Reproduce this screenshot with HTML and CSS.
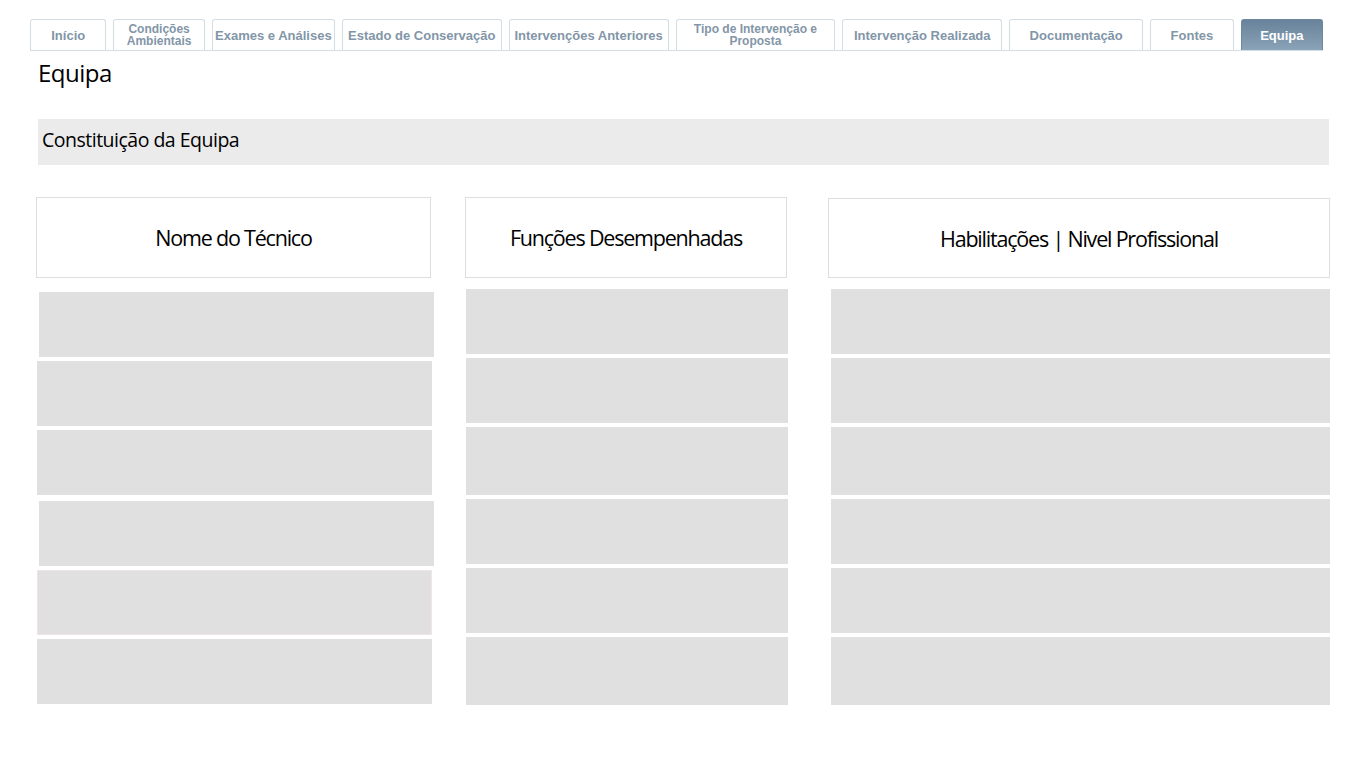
FILE: index.html
```html
<!DOCTYPE html>
<html lang="pt">
<head>
<meta charset="utf-8">
<title>Equipa</title>
<link rel="stylesheet" href="styles.css">
</head>
<body>
<nav class="tabs">
  <a class="tab w76">Início</a>
  <a class="tab w91 two">Condições<br>Ambientais</a>
  <a class="tab w124">Exames e Análises</a>
  <a class="tab w160">Estado de Conservação</a>
  <a class="tab w160">Intervenções Anteriores</a>
  <a class="tab w160 two">Tipo de Intervenção e<br>Proposta</a>
  <a class="tab w160">Intervenção Realizada</a>
  <a class="tab w134">Documentação</a>
  <a class="tab w83">Fontes</a>
  <a class="tab w82 active">Equipa</a>
</nav>
<main class="page">
  <h1 class="title">Equipa</h1>
  <div class="section">Constituição da Equipa</div>
  <div class="cols">
    <div class="col c1">
      <div class="head">Nome do Técnico</div>
      <div class="rows">
        <div class="cell s1"></div>
        <div class="cell"></div>
        <div class="cell"></div>
        <div class="cell s1 mt2"></div>
        <div class="cell pink"></div>
        <div class="cell"></div>
      </div>
    </div>
    <div class="col c2">
      <div class="head">Funções Desempenhadas</div>
      <div class="rows">
        <div class="cell"></div>
        <div class="cell"></div>
        <div class="cell tall"></div>
        <div class="cell"></div>
        <div class="cell"></div>
        <div class="cell tall"></div>
      </div>
    </div>
    <div class="col c3">
      <div class="head">Habilitações | Nivel Profissional</div>
      <div class="rows">
        <div class="cell"></div>
        <div class="cell"></div>
        <div class="cell tall"></div>
        <div class="cell"></div>
        <div class="cell"></div>
        <div class="cell tall"></div>
      </div>
    </div>
  </div>
</main>
</body>
</html>
```
FILE: styles.css
```css
* { box-sizing: border-box; }
html, body { margin: 0; padding: 0; background: #fff; }
body { font-family: "Open Sans", "Liberation Sans", sans-serif; color: #000; }

.tabs {
  display: flex;
  gap: 7px;
  margin: 20px 0 0 30px;
  width: 1293px;
  height: 31px;
  border-bottom: 1px solid #d3dde4;
  align-items: flex-end;
}
.tab {
  height: 31px;
  border: 1px solid #d3dde4;
  border-bottom: none;
  border-radius: 3px 3px 0 0;
  display: flex;
  align-items: center;
  justify-content: center;
  text-align: center;
  font-family: "Liberation Sans", Arial, sans-serif;
  font-weight: bold;
  font-size: 13px;
  color: #8296a8;
  background: #fff;
}
.tab.two { font-size: 12px; line-height: 12px; padding-bottom: 1px; }
.tab.active {
  background: linear-gradient(#67829a, #8ba3b7);
  border-color: #6f899f;
  color: #fff;
}
.w76 { width: 77px; }
.w91 { width: 92px; }
.w124 { width: 124px; }
.w160 { width: 161px; }
.w134 { width: 135px; }
.w83 { width: 84px; }
.w82 { width: 83px; }

.page { padding: 0 36px; }
.title {
  margin: 8px 0 0 2px;
  font-weight: normal;
  font-size: 24px;
  line-height: 28px;
  letter-spacing: -0.5px;
}
.section {
  margin: 32px 0 0 2px;
  width: 1291px;
  height: 46px;
  background: #ebebeb;
  font-size: 19.5px;
  letter-spacing: -0.5px;
  line-height: 42px;
  padding-left: 4px;
}
.cols {
  display: flex;
  margin-top: 32px;
  align-items: flex-start;
}
.col { display: flex; flex-direction: column; }
.c1 { width: 395px; }
.c2 { width: 322px; margin-left: 34px; }
.c3 { width: 502px; margin-left: 41px; }
.head {
  height: 81px;
  border: 1px solid #dedede;
  display: flex;
  align-items: center;
  justify-content: center;
  font-size: 21.5px;
  letter-spacing: -1.2px;
  white-space: nowrap;
}
.c3 .head { margin-top: 1px; height: 80px; }
.rows { display: flex; flex-direction: column; gap: 4px; margin-top: 11px; }
.c1 .rows { margin-top: 14px; }
.cell {
  height: 65px;
  background: #e0e0e0;
  width: 395px;
}
.c1 .cell { margin-left: 1px; }
.c1 .cell.s1 { margin-left: 3px; }
.c1 .cell.mt2 { margin-top: 2px; }
.c1 .cell.pink { border: 1px solid #f0e4e6; }
.c2 .cell { width: 322px; margin-left: 1px; }
.c2 .cell.tall { height: 68px; }
.c3 .cell { width: 499px; margin-left: 3px; }
.c3 .cell.tall { height: 68px; }
```
